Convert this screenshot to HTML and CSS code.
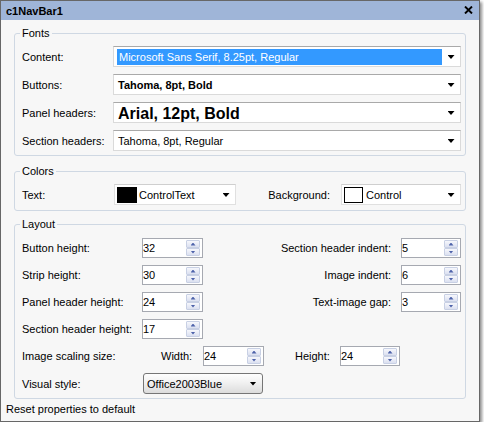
FILE: index.html
```html
<!DOCTYPE html>
<html>
<head>
<meta charset="utf-8">
<title>c1NavBar1</title>
<link rel="stylesheet" href="styles.css">
</head>
<body>
<div class="window">
  <div class="titlebar">
    <span class="title">c1NavBar1</span>
    <svg class="close" width="9" height="8" viewBox="0 0 9 8"><path d="M1 0.5 L8 7.5 M8 0.5 L1 7.5" stroke="#000" stroke-width="1.9" fill="none"/></svg>
  </div>
  <div class="body">
    <fieldset class="group fonts">
      <legend>Fonts</legend>
      <div class="row">
        <span class="label">Content:</span>
        <div class="combo"><span class="value selected">Microsoft Sans Serif, 8.25pt, Regular</span><span class="drop"><span class="arrow"></span></span></div>
      </div>
      <div class="row">
        <span class="label">Buttons:</span>
        <div class="combo"><span class="value bold">Tahoma, 8pt, Bold</span><span class="drop"><span class="arrow"></span></span></div>
      </div>
      <div class="row">
        <span class="label">Panel headers:</span>
        <div class="combo"><span class="value big">Arial, 12pt, Bold</span><span class="drop"><span class="arrow"></span></span></div>
      </div>
      <div class="row">
        <span class="label">Section headers:</span>
        <div class="combo"><span class="value">Tahoma, 8pt, Regular</span><span class="drop"><span class="arrow"></span></span></div>
      </div>
    </fieldset>

    <fieldset class="group colors">
      <legend>Colors</legend>
      <div class="row">
        <span class="label label-text">Text:</span>
        <div class="combo color-combo text-combo"><span class="swatch black"></span><span class="value">ControlText</span><span class="drop"><span class="arrow"></span></span></div>
        <span class="spacer"></span>
        <span class="label-bg">Background:</span>
        <div class="combo color-combo bg-combo"><span class="swatch white"></span><span class="value">Control</span><span class="drop"><span class="arrow"></span></span></div>
      </div>
    </fieldset>

    <fieldset class="group layout">
      <legend>Layout</legend>
      <div class="lrow">
        <span class="label-l">Button height:</span>
        <div class="spin"><span class="spin-value">32</span><span class="spin-btns"><span class="spin-up"></span><span class="spin-down"></span></span></div>
        <span class="spacer"></span>
        <span class="label-r">Section header indent:</span>
        <div class="spin narrow"><span class="spin-value">5</span><span class="spin-btns"><span class="spin-up"></span><span class="spin-down"></span></span></div>
      </div>
      <div class="lrow">
        <span class="label-l">Strip height:</span>
        <div class="spin"><span class="spin-value">30</span><span class="spin-btns"><span class="spin-up"></span><span class="spin-down"></span></span></div>
        <span class="spacer"></span>
        <span class="label-r">Image indent:</span>
        <div class="spin narrow"><span class="spin-value">6</span><span class="spin-btns"><span class="spin-up"></span><span class="spin-down"></span></span></div>
      </div>
      <div class="lrow">
        <span class="label-l">Panel header height:</span>
        <div class="spin"><span class="spin-value">24</span><span class="spin-btns"><span class="spin-up"></span><span class="spin-down"></span></span></div>
        <span class="spacer"></span>
        <span class="label-r">Text-image gap:</span>
        <div class="spin narrow"><span class="spin-value">3</span><span class="spin-btns"><span class="spin-up"></span><span class="spin-down"></span></span></div>
      </div>
      <div class="lrow">
        <span class="label-l">Section header height:</span>
        <div class="spin"><span class="spin-value">17</span><span class="spin-btns"><span class="spin-up"></span><span class="spin-down"></span></span></div>
      </div>
      <div class="lrow">
        <span class="label-img">Image scaling size:</span>
        <span class="label-w">Width:</span>
        <div class="spin"><span class="spin-value">24</span><span class="spin-btns"><span class="spin-up"></span><span class="spin-down"></span></span></div>
        <span class="label-h">Height:</span>
        <div class="spin narrow"><span class="spin-value">24</span><span class="spin-btns"><span class="spin-up"></span><span class="spin-down"></span></span></div>
      </div>
      <div class="lrow vrow">
        <span class="label-v">Visual style:</span>
        <div class="vcombo"><span class="value">Office2003Blue</span><span class="drop"><span class="arrow"></span></span></div>
      </div>
    </fieldset>

    <div class="status">Reset properties to default</div>
  </div>
</div>
</body>
</html>
```

FILE: styles.css
```css
html, body {
  margin: 0;
  padding: 0;
  background: #ffffff;
}

.window {
  width: 480px;
  height: 422px;
  box-sizing: border-box;
  border: 1px solid #676767;
  background: #f7f7f7;
  display: flex;
  flex-direction: column;
  font-family: "Liberation Sans", Arial, sans-serif;
  font-size: 11px;
  color: #000;
  box-shadow: 2px 2px 3px rgba(0, 0, 0, 0.45);
}

.titlebar {
  height: 19px;
  flex: none;
  background: #9fb5d8;
  display: flex;
  align-items: center;
  justify-content: space-between;
  padding: 1px 6px 0 5px;
  box-sizing: border-box;
}

.title {
  font-weight: bold;
  line-height: 14px;
}

.close {
  display: block;
  margin-top: -2px;
}

.body {
  padding-top: 6px;
  flex: 1;
  display: flex;
  flex-direction: column;
}

.group {
  margin: 0 13px;
  border: 1px solid #cfd8e3;
  border-radius: 3px;
  min-width: 0;
  display: flex;
  flex-direction: column;
}

.group legend {
  padding: 0 2px;
  margin-left: -2px;
  line-height: 14px;
}

.fonts {
  padding: 6px 4px 4px 7px;
  gap: 7px;
}

.colors {
  margin-top: 8px;
  padding: 6px 4px 5px 7px;
}

.layout {
  margin-top: 6px;
  padding: 7px 4px 4px 7px;
  gap: 7px;
}

.row {
  display: flex;
  align-items: center;
}

.label {
  width: 91px;
  flex: none;
  white-space: nowrap;
}

.label-text {
  width: 92px;
}

.spacer {
  flex: 1;
}

.combo {
  flex: 1;
  display: flex;
  align-items: center;
  height: 21px;
  box-sizing: border-box;
  border: 1px solid #dadada;
  border-top-color: #a9a9a9;
  background: #fff;
  padding: 2px 0 1px 3px;
}

.value {
  flex: 1;
  min-width: 0;
  line-height: 16px;
  height: 16px;
  padding-left: 1px;
  white-space: nowrap;
  overflow: visible;
}

.value.selected {
  background: #3399ff;
  color: #fff;
  padding-left: 2px;
}

.value.bold {
  font-weight: bold;
}

.value.big {
  font-weight: bold;
  font-size: 16px;
  line-height: 17px;
}

.drop {
  width: 18px;
  flex: none;
  display: flex;
  justify-content: center;
  align-items: center;
  align-self: stretch;
}

.arrow {
  width: 7px;
  height: 4px;
  background: #000;
  clip-path: polygon(0 0, 100% 0, 50% 100%);
}

.color-combo {
  flex: none;
  padding: 2px 0 1px 2px;
  border-color: #e0e0e0;
  border-top-color: #cfcfcf;
}

.text-combo {
  width: 122px;
}

.bg-combo {
  width: 120px;
}

.swatch {
  width: 20px;
  height: 16px;
  flex: none;
  box-sizing: border-box;
  margin-right: 1px;
}

.swatch.black {
  background: #000;
}

.swatch.white {
  width: 19px;
  background: #fff;
  border: 1px solid #000;
  margin-right: 2px;
}

.label-bg {
  margin-right: 11px;
  white-space: nowrap;
}

.lrow {
  display: flex;
  align-items: center;
  height: 20px;
}

.vrow {
  height: 21px;
}

.label-l {
  width: 120px;
  flex: none;
  white-space: nowrap;
}

.label-r {
  margin-right: 10px;
  white-space: nowrap;
}

.label-img {
  width: 139px;
  flex: none;
  white-space: nowrap;
}

.label-w {
  width: 42px;
  flex: none;
}

.label-h {
  width: 45px;
  flex: none;
  margin-left: 31px;
}

.label-v {
  width: 121px;
  flex: none;
}

.spin {
  width: 61px;
  height: 20px;
  flex: none;
  box-sizing: border-box;
  border: 1px solid #a6a9b1;
  background: #fff;
  display: flex;
}

.spin.narrow {
  width: 60px;
}

.spin-value {
  flex: 1;
  line-height: 18px;
  padding-left: 0;
}

.spin-btns {
  width: 14px;
  flex: none;
  display: flex;
  flex-direction: column;
  padding: 1px 2px 1px 0;
}

.spin-up,
.spin-down {
  flex: 1;
  box-sizing: border-box;
  border: 1px solid #c8d0e4;
  border-radius: 1px;
  background: linear-gradient(#f6f7fc, #dbe0f0);
  display: flex;
  align-items: center;
  justify-content: center;
}

.spin-up::after,
.spin-down::after {
  content: "";
  width: 5px;
  height: 3px;
  background: #4d62aa;
}

.spin-up::after {
  clip-path: polygon(50% 0, 100% 100%, 0 100%);
}

.spin-down::after {
  clip-path: polygon(0 0, 100% 0, 50% 100%);
}

.vcombo {
  width: 120px;
  height: 21px;
  flex: none;
  box-sizing: border-box;
  border: 1px solid #767676;
  border-radius: 3px;
  background: linear-gradient(#fefefe, #f1f1f1 45%, #dcdcdc);
  display: flex;
  align-items: center;
  padding-left: 2px;
}

.vcombo .value {
  line-height: 16px;
}

.status {
  margin-top: 3px;
  padding-left: 5px;
  line-height: 14px;
}
```
